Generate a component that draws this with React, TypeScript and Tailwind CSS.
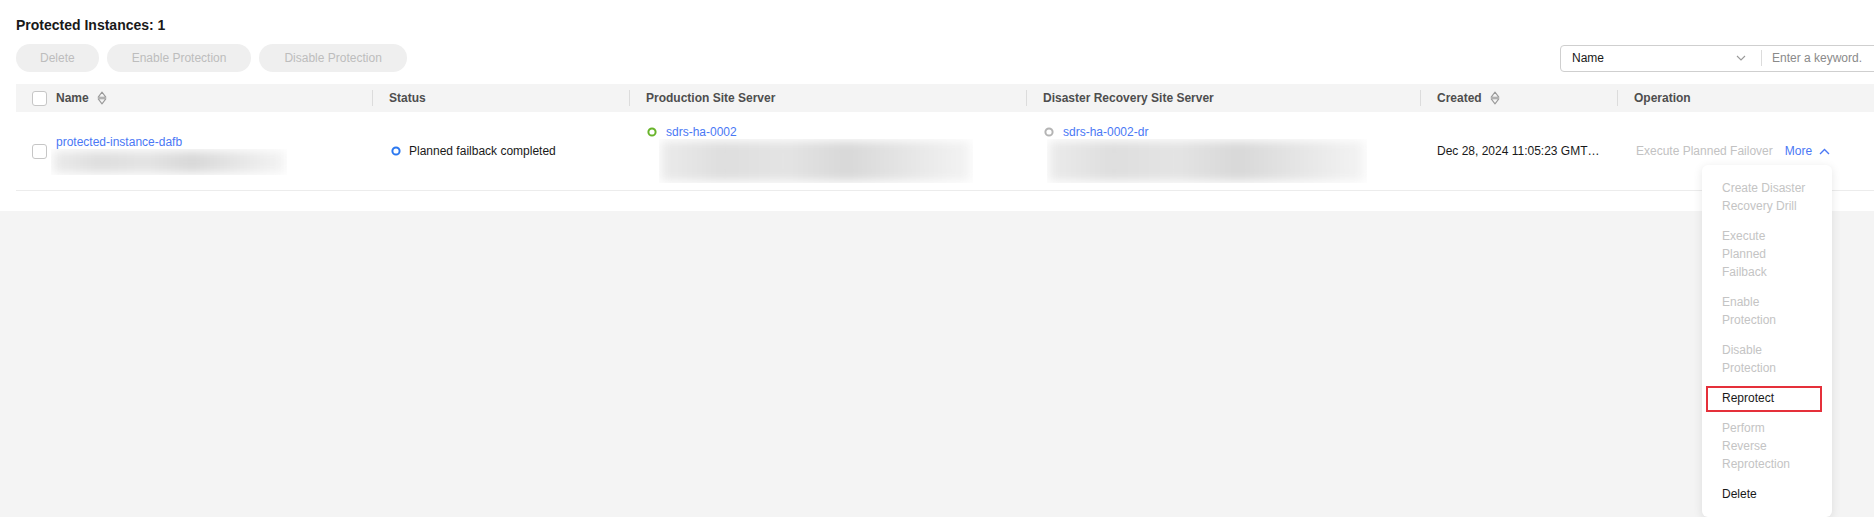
import React from "react";

const SortIcon = () => (
  <svg width="10" height="14" viewBox="0 0 10 14" className="ml-[8px]">
    <path d="M5 1.2 L8.8 6.2 H1.2 Z" fill="none" stroke="#9a9a9a" strokeWidth="1.1" strokeLinejoin="round" />
    <path d="M5 12.8 L8.8 7.8 H1.2 Z" fill="none" stroke="#9a9a9a" strokeWidth="1.1" strokeLinejoin="round" />
  </svg>
);

const Ring = ({ color }: { color: string }) => (
  <svg width="12" height="12" viewBox="0 0 12 12" className="shrink-0">
    <circle cx="6" cy="6" r="3.6" fill="none" stroke={color} strokeWidth="2" />
  </svg>
);

const Checkbox = () => (
  <div className="w-[15px] h-[15px] rounded-[3px] border border-[#c6c6c6] bg-white shrink-0" />
);

const HeadCell = ({ children, first }: { children: React.ReactNode; first?: boolean }) => (
  <div className="flex items-center h-full">
    {!first && <span className="w-px h-4 bg-[#dcdcdc] mr-4 shrink-0" />}
    {children}
  </div>
);

const Blur = ({ w, h, className }: { w: string; h: string; className?: string }) => (
  <div className={`${w} ${h} ${className ?? ""} relative overflow-hidden`}>
    <div className="absolute inset-[2px] blur-[5px] bg-[linear-gradient(90deg,#ebebeb_0%,#dedede_20%,#e4e4e4_40%,#d8d8d8_60%,#e6e6e6_80%,#f4f4f4_100%)]" />
  </div>
);

const menu: { lines: string[]; enabled?: boolean; boxed?: boolean }[] = [
  { lines: ["Create Disaster", "Recovery Drill"] },
  { lines: ["Execute", "Planned", "Failback"] },
  { lines: ["Enable", "Protection"] },
  { lines: ["Disable", "Protection"] },
  { lines: ["Reprotect"], enabled: true, boxed: true },
  { lines: ["Perform", "Reverse", "Reprotection"] },
  { lines: ["Delete"], enabled: true },
];

export default function App() {
  return (
    <div className="w-[1874px] h-[517px] overflow-hidden relative bg-[#f4f4f4] font-['Liberation_Sans',Arial,sans-serif] text-[12px] text-[#191919]">
      <div className="w-[1890px] bg-white pl-4 pt-[15px] pb-5">
        <div className="text-[14px] leading-5 font-bold text-[#191919]">Protected Instances: 1</div>
        <div className="mt-[9px] flex items-center h-7">
          <div className="flex gap-2">
            <button className="h-7 px-[24px] rounded-full bg-[#efefef] text-[#bdbdbd] text-[12px]">Delete</button>
            <button className="h-7 px-[25px] rounded-full bg-[#efefef] text-[#bdbdbd] text-[12px]">Enable Protection</button>
            <button className="h-7 px-[25px] rounded-full bg-[#efefef] text-[#bdbdbd] text-[12px]">Disable Protection</button>
          </div>
          <div className="ml-auto w-[330px] h-[27px] border border-[#cfcfcf] rounded-[4px] flex items-center">
            <div className="w-[200px] flex items-center pl-[11px] pr-[15px]">
              <span className="text-[#191919]">Name</span>
              <svg width="10" height="6" viewBox="0 0 10 6" className="ml-auto">
                <path d="M1 1 L5 5 L9 1" fill="none" stroke="#9a9a9a" strokeWidth="1.1" />
              </svg>
            </div>
            <span className="w-px h-4 bg-[#dcdcdc]" />
            <span className="ml-[10px] text-[#8a8a8a]">Enter a keyword.</span>
          </div>
        </div>

        <div className="mt-3">
          <div className="grid grid-cols-[356px_257px_397px_394px_197px_1fr] h-7 bg-[#f4f4f4] font-bold text-[#4e4e4e]">
            <HeadCell first>
              <div className="pl-4 flex items-center">
                <Checkbox />
                <span className="ml-[9px]">Name</span>
                <SortIcon />
              </div>
            </HeadCell>
            <HeadCell>Status</HeadCell>
            <HeadCell>Production Site Server</HeadCell>
            <HeadCell>Disaster Recovery Site Server</HeadCell>
            <HeadCell>
              Created
              <SortIcon />
            </HeadCell>
            <HeadCell>Operation</HeadCell>
          </div>

          <div className="grid grid-cols-[356px_257px_397px_394px_197px_1fr] h-[79px] border-b border-[#ececec]">
            <div className="flex items-center pl-4">
              <Checkbox />
              <div className="mt-[5px] flex flex-col">
                <span className="ml-[9px] leading-[18px] text-[#4a78f5]">protected-instance-dafb</span>
                <Blur w="w-[236px]" h="h-[26px]" className="-mt-[2px] ml-[4px]" />
              </div>
            </div>
            <div className="flex items-center pl-[18px]">
              <Ring color="#2b78f0" />
              <span className="ml-[7px]">Planned failback completed</span>
            </div>
            <div className="flex items-center pl-[17px]">
              <div className="mt-[4px] flex flex-col">
                <div className="flex items-center leading-[18px]">
                  <Ring color="#68b42a" />
                  <span className="ml-[8px] text-[#4a78f5]">sdrs-ha-0002</span>
                </div>
                <Blur w="w-[314px]" h="h-[44px]" className="-mt-[2px] ml-[13px]" />
              </div>
            </div>
            <div className="flex items-center pl-[17px]">
              <div className="mt-[4px] flex flex-col">
                <div className="flex items-center leading-[18px]">
                  <Ring color="#b4b4b4" />
                  <span className="ml-[8px] text-[#4a78f5]">sdrs-ha-0002-dr</span>
                </div>
                <Blur w="w-[320px]" h="h-[44px]" className="-mt-[2px] ml-[4px]" />
              </div>
            </div>
            <div className="flex items-center pl-[17px] pr-[16px] min-w-0">
              <span className="truncate">Dec 28, 2024 11:05:23 GMT+08:00</span>
            </div>
            <div className="flex items-center pl-[19px]">
              <span className="text-[#c2c2c2]">Execute Planned Failover</span>
              <span className="ml-3 text-[#4a78f5]">More</span>
              <svg width="11" height="7" viewBox="0 0 11 7" className="ml-[7px]">
                <path d="M1 6 L5.5 1.5 L10 6" fill="none" stroke="#4a78f5" strokeWidth="1.4" />
              </svg>
            </div>
          </div>
        </div>
      </div>

      <div className="absolute left-[1702px] top-[165px] w-[130px] bg-white rounded-[6px] shadow-[0_2px_10px_rgba(0,0,0,0.10)] py-2">
        {menu.map((m, i) => (
          <div
            key={i}
            className={`relative px-5 py-1.5 leading-[18px] ${m.enabled ? "text-[#191919]" : "text-[#c4c4c4]"}`}
          >
            {m.lines.map((l, j) => (
              <div key={j}>{l}</div>
            ))}
            {m.boxed && (
              <div className="absolute left-[4px] right-[10px] top-[3px] bottom-[1px] border-2 border-[#e5303a]" />
            )}
          </div>
        ))}
      </div>
    </div>
  );
}
